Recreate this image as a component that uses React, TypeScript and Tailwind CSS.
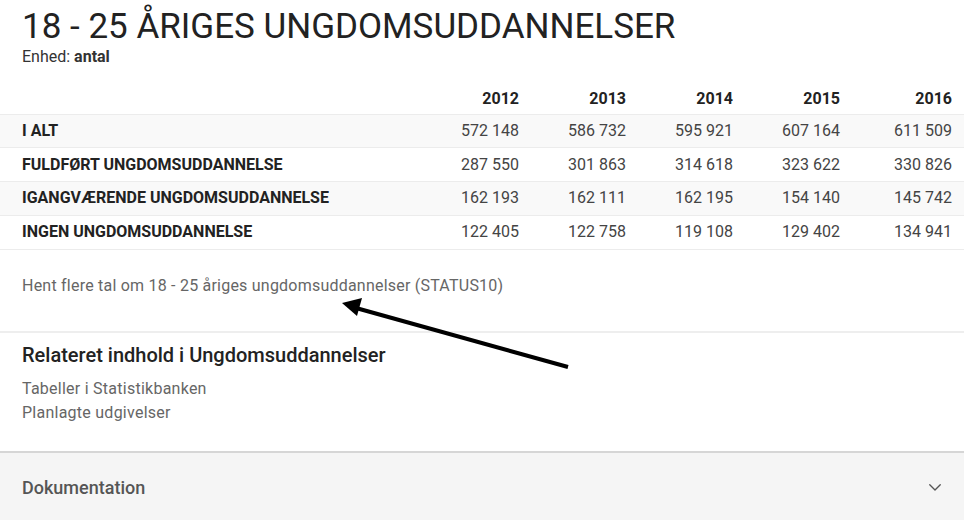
import React from 'react';

const years = ['2012', '2013', '2014', '2015', '2016'];

const rows = [
  { label: 'I ALT', values: ['572 148', '586 732', '595 921', '607 164', '611 509'] },
  { label: 'FULDFØRT UNGDOMSUDDANNELSE', values: ['287 550', '301 863', '314 618', '323 622', '330 826'] },
  { label: 'IGANGVÆRENDE UNGDOMSUDDANNELSE', values: ['162 193', '162 111', '162 195', '154 140', '145 742'] },
  { label: 'INGEN UNGDOMSUDDANNELSE', values: ['122 405', '122 758', '119 108', '129 402', '134 941'] },
];

function Arrow() {
  return (
    <svg className="pointer-events-none absolute left-0 top-0" width="964" height="520">
      <line x1="568" y1="367" x2="356" y2="308" stroke="#000" strokeWidth="4" />
      <polygon points="342,303 362,298 357,316" fill="#000" />
    </svg>
  );
}

export default function App() {
  return (
    <div
      className="relative h-[520px] w-[964px] overflow-hidden bg-white text-[#333]"
      style={{ fontFamily: 'Roboto, "Liberation Sans", sans-serif' }}
    >
      <div className="px-[22px] pt-[6px]">
        <h1 className="text-[35px] leading-[42px] text-[#222]">18 - 25 ÅRIGES UNGDOMSUDDANNELSER</h1>
        <div className="text-[16px] leading-[18px] text-[#333]">
          Enhed: <span className="font-bold">antal</span>
        </div>
      </div>

      <table className="mt-[19px] w-full border-collapse text-[16px]">
        <thead>
          <tr className="h-[29px]">
            <th className="pl-[22px]" />
            {years.map((y, i) => (
              <th key={y} className={`${i === 4 ? 'w-[112px]' : 'w-[107px]'} pr-[12px] text-right font-bold text-[#222]`}>
                {y}
              </th>
            ))}
          </tr>
        </thead>
        <tbody>
          {rows.map((r, i) => (
            <tr key={r.label} className={`h-[33.8px] border-t border-[#ececec] ${i % 2 === 0 ? 'bg-[#f9f9f9]' : 'bg-white'}`}>
              <td className="pl-[22px] text-left font-bold text-[#222]">{r.label}</td>
              {r.values.map((v) => (
                <td key={v} className="pr-[12px] text-right text-[#444]">
                  {v}
                </td>
              ))}
            </tr>
          ))}
          <tr className="h-0 border-t border-[#ececec]" />
        </tbody>
      </table>

      <div className="h-[82px] px-[22px] pt-[27px] text-[16px] leading-[20px] tracking-[0.22px] text-[#666]">
        Hent flere tal om 18 - 25 åriges ungdomsuddannelser (STATUS10)
      </div>

      <div className="border-t-2 border-[#eeeeee] px-[22px] pb-[26px] pt-[10px]">
        <h2 className="text-[20px] leading-[24px] font-medium text-[#222]">Relateret indhold i Ungdomsuddannelser</h2>
        <div className="mt-[10px] flex flex-col text-[16px] leading-[24px] tracking-[0.25px] text-[#666]">
          <span>Tabeller i Statistikbanken</span>
          <span>Planlagte udgivelser</span>
        </div>
      </div>

      <div className="flex h-[70px] items-center justify-between border-t-2 border-[#d6d6d6] bg-[#f5f5f5] pl-[22px] pr-[20px]">
        <span className="text-[18px] font-medium text-[#555]">Dokumentation</span>
        <svg width="18" height="18" viewBox="0 0 24 24" fill="none" stroke="#555" strokeWidth="1.8" strokeLinecap="round" strokeLinejoin="round">
          <path d="M5 9l7 7 7-7" />
        </svg>
      </div>

      <Arrow />
    </div>
  );
}
